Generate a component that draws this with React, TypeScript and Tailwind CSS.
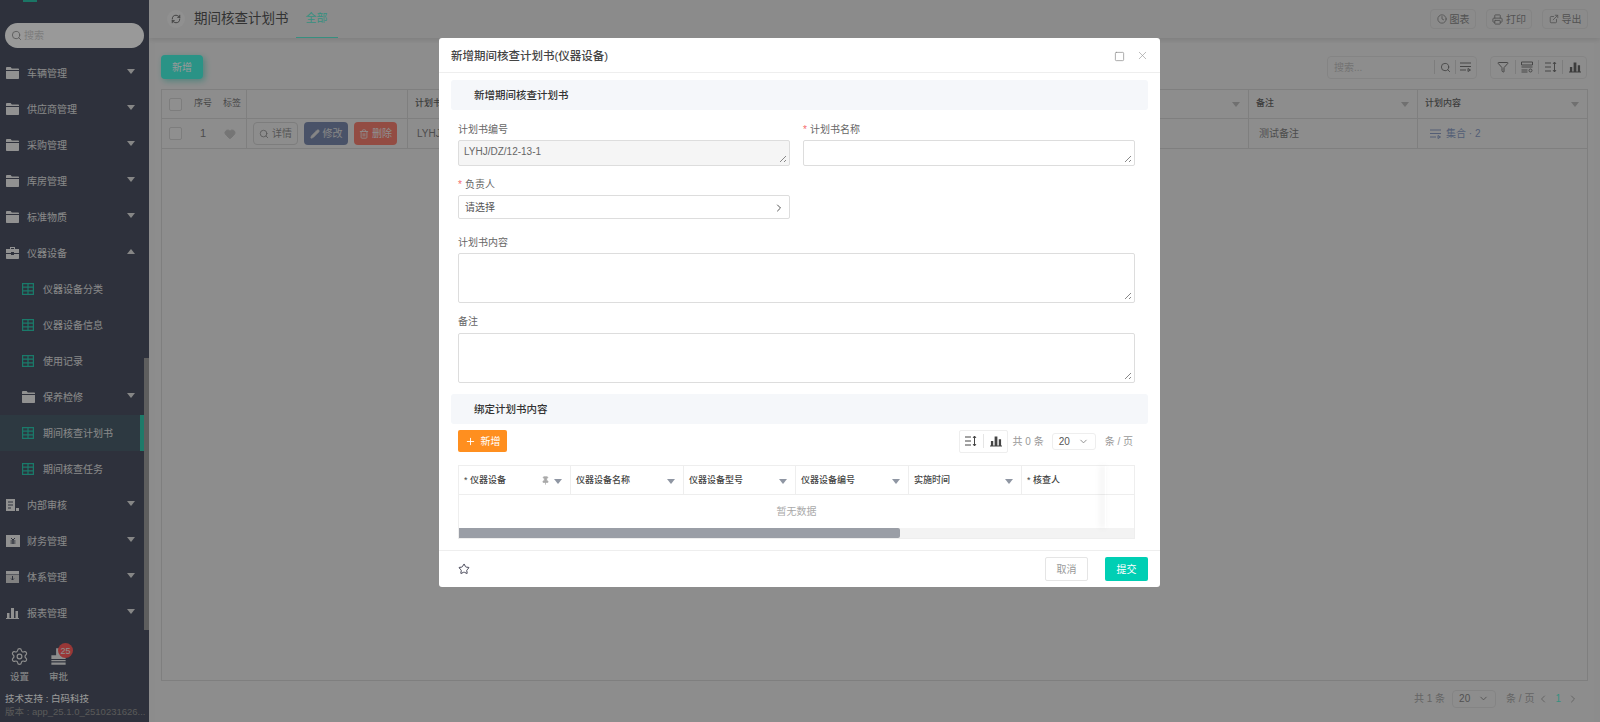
import { ChevronDown, ChevronLeft, ChevronRight, Clock, ExternalLink, Filter, Heart, Pencil, Pin, Plus, Printer, RefreshCw, Search, Settings, Square, Star, Trash2, X } from 'lucide-react'
import type { ReactNode } from 'react'

const font = { fontFamily: '"Liberation Sans", "Noto Sans CJK SC", sans-serif' }

function Caret({ up = false, className = 'border-t-[#a8a8a8]' }: { up?: boolean; className?: string }) {
  return (
    <span
      className={`inline-block h-0 w-0 border-x-[4px] border-t-[5px] border-x-transparent ${className} ${up ? 'rotate-180' : ''}`}
    />
  )
}

function FolderIcon() {
  return (
    <svg viewBox="0 0 13 12" className="h-3 w-[13px] fill-[#f2f2f2]">
      <path d="M0 1.200C0 .6.5 0 1 0h3.600l1.200 1.600H12c.6 0 1 .4 1 1V3H0z" />
      <path d="M0 4h13v7c0 .6-.4 1-1 1H1c-.6 0-1-.4-1-1z" />
    </svg>
  )
}

function BagIcon() {
  return (
    <svg viewBox="0 0 13 12" className="h-3 w-[13px] fill-[#f2f2f2]">
      <path d="M4 0h5v2h4v4H8V5H5v1H0V2h4zm1 1v1h3V1zM0 7h5v1h3V7h5v4c0 .6-.4 1-1 1H1c-.6 0-1-.4-1-1z" />
    </svg>
  )
}

function DocIcon() {
  return (
    <svg viewBox="0 0 13 12" className="h-3 w-[13px]">
      <path d="M0 0h9v12H0z" fill="#f2f2f2" />
      <path d="M2 3h5M2 6h5M2 9h3" stroke="#4d5364" />
      <path d="M10 9h3v3h-3z" fill="#f2f2f2" />
    </svg>
  )
}

function MoneyIcon() {
  return (
    <svg viewBox="0 0 14 12" className="h-3 w-[14px]">
      <path d="M0 0h14v12H0z" fill="#f2f2f2" />
      <path d="M5 3l2 2 2-2M4.500 6h5M4.500 8h5M7 5v4" stroke="#4d5364" fill="none" />
    </svg>
  )
}

function ArchiveIcon() {
  return (
    <svg viewBox="0 0 13 12" className="h-3 w-[13px]">
      <path d="M0 0h13v3H0z" fill="#f2f2f2" />
      <path d="M0 3.500h13V12H0z" fill="#d8d8d8" />
      <path d="M6.500 5v4M5 7.500 6.500 9 8 7.500" stroke="#4d5364" fill="none" />
    </svg>
  )
}

function BarsIcon({ className = 'h-3 w-[13px] fill-[#f2f2f2]' }: { className?: string }) {
  return (
    <svg viewBox="0 0 13 12" className={className}>
      <path d="M0 11h13v1H0zM1 6h2.500v5H1zM5 1h3v10H5zM9.500 4H12v7H9.500z" />
    </svg>
  )
}

function GridIcon() {
  return (
    <svg viewBox="0 0 12 12" className="h-3 w-3 fill-none stroke-[#2cccb1] stroke-[1.2]">
      <path d="M.6.6h10.800v10.800H.6zM.6 4.200h10.800M.6 7.800h10.800M6 .6v10.800" />
    </svg>
  )
}

function SortIcon({ className = 'h-3 w-3 stroke-[#444]' }: { className?: string }) {
  return (
    <svg viewBox="0 0 12 12" className={`${className} fill-none`}>
      <path d="M0 2h6M0 6h6M0 10h6M9.500 1v10M8 3l1.500-2L11 3M8 9l1.500 2L11 9" />
    </svg>
  )
}

function ListIcon({ className = 'h-3 w-3 stroke-[#777]' }: { className?: string }) {
  return (
    <svg viewBox="0 0 12 12" className={`${className} fill-none`}>
      <path d="M0 2h11M0 5.500h11M0 9h6M8 7.500v3l2.500-1.500z" />
    </svg>
  )
}

function FormIcon() {
  return (
    <svg viewBox="0 0 12 12" className="h-3 w-3 fill-none stroke-[#777]">
      <path d="M.5 1h11v3h-11zM.5 6h11M.5 9h6M.5 11h6" />
      <circle cx="9.500" cy="9.500" r="1.500" />
    </svg>
  )
}

function MenuRow({ icon, label, caret = 'down', sub = false, active = false }: { icon: ReactNode; label: string; caret?: 'down' | 'up' | 'none'; sub?: boolean; active?: boolean }) {
  return (
    <div className={`relative flex h-9 items-center text-[10px] text-[#e4e4e4] ${sub ? 'pl-[22px]' : 'pl-[6px]'} ${active ? 'bg-[#4b5f6d]' : ''}`}>
      <span className="flex w-[21px] shrink-0">{icon}</span>
      <span>{label}</span>
      {caret !== 'none' && (
        <span className="absolute left-[127px] top-[14px] flex">
          <Caret up={caret === 'up'} className="border-t-[#e0e0e0]" />
        </span>
      )}
      {active && <span className="absolute right-0 top-0 h-full w-1 bg-[#33cbb0]" />}
    </div>
  )
}

function Sidebar() {
  return (
    <aside className="relative flex h-full w-[149px] shrink-0 flex-col bg-[#4d5364]">
      <div className="ml-[23px] h-[2px] w-[14px] bg-[#2ec4a8]" />
      <div className="mx-[5px] mt-[21px] flex h-[25px] w-[139px] items-center gap-[2px] rounded-full bg-white pl-[6px] text-[10px] text-[#d0d0d0]">
        <Search size={11} className="text-[#999]" />
        搜索
      </div>
      <div className="mt-[7px] w-[144px]">
        <MenuRow icon={<FolderIcon />} label="车辆管理" />
        <MenuRow icon={<FolderIcon />} label="供应商管理" />
        <MenuRow icon={<FolderIcon />} label="采购管理" />
        <MenuRow icon={<FolderIcon />} label="库房管理" />
        <MenuRow icon={<FolderIcon />} label="标准物质" />
        <MenuRow icon={<BagIcon />} label="仪器设备" caret="up" />
        <MenuRow sub icon={<GridIcon />} label="仪器设备分类" caret="none" />
        <MenuRow sub icon={<GridIcon />} label="仪器设备信息" caret="none" />
        <MenuRow sub icon={<GridIcon />} label="使用记录" caret="none" />
        <MenuRow sub icon={<FolderIcon />} label="保养检修" />
        <MenuRow sub active icon={<GridIcon />} label="期间核查计划书" caret="none" />
        <MenuRow sub icon={<GridIcon />} label="期间核查任务" caret="none" />
        <MenuRow icon={<DocIcon />} label="内部审核" />
        <MenuRow icon={<MoneyIcon />} label="财务管理" />
        <MenuRow icon={<ArchiveIcon />} label="体系管理" />
        <MenuRow icon={<BarsIcon />} label="报表管理" />
      </div>
      <div className="mt-[16px] flex text-[9.5px] leading-[12px] text-[#e8e8e8]">
        <div className="flex w-[39px] flex-col items-center gap-[5px]">
          <Settings size={19} strokeWidth={1.5} className="text-[#ececec]" />
          设置
        </div>
        <div className="relative flex w-[39px] flex-col items-center gap-[5px]">
          <svg viewBox="0 0 16 16" className="h-[19px] w-[19px] fill-[#ececec]">
            <path d="M6 1h4v6h4v3H2V7h4zM2 11h12v1H2zM2 13h12v2H2z" />
          </svg>
          审批
          <span className="absolute left-[19px] top-[-4px] flex h-[15px] w-[15px] items-center justify-center rounded-full bg-[#ff5c5c] text-[9px] text-[#eee]">25</span>
        </div>
      </div>
      <div className="mt-[9px] pl-[5px] text-[9.5px] leading-[13px] text-white">技术支持 : 白码科技</div>
      <div className="whitespace-nowrap pl-[5px] text-[9.5px] leading-[13px] text-[#969696]">版本 : app_25.1.0_2510231626...</div>
      {/* menu scrollbar */}
      <span className="absolute left-[144px] top-[358px] h-[272px] w-[5px] bg-[#9d9d9d]" />
    </aside>
  )
}

function HeadCell({ label, className = '' }: { label: string; className?: string }) {
  return (
    <div className={`relative flex h-full items-center border-r border-[#d4d4d4] pl-[7px] text-[9px] font-medium text-[#666] ${className}`}>
      {label}
      <span className="absolute right-[8px] top-[12px] flex">
        <Caret className="border-t-[#bbb]" />
      </span>
    </div>
  )
}

function ToolBtn({ icon, label }: { icon: ReactNode; label: string }) {
  return (
    <div className="flex h-[20px] w-[46px] items-center justify-center gap-[3px] rounded-sm border border-[#dcdcdc] text-[10px] text-[#8a8a8a]">
      {icon}
      {label}
    </div>
  )
}

function Background() {
  return (
    <main className="flex h-full min-w-0 flex-1 flex-col bg-[#eaeaea]">
      <header className="flex h-[38px] items-center bg-[#e8e8e8] pl-[18px] pr-3 shadow-[0_2px_5px_rgba(0,0,0,.1)]">
        <span className="flex h-[18px] w-[18px] items-center justify-center rounded-full bg-[#f0f0f0]">
          <RefreshCw size={10} className="text-[#555]" />
        </span>
        <span className="ml-[9px] text-[13.5px] text-[#555]">期间核查计划书</span>
        <span className="ml-[7px] flex h-full w-[42px] items-center justify-center border-b border-[#5cefd6] text-[11px] text-[#5cefd6]">全部</span>
        <div className="ml-auto flex gap-[10px]">
          <ToolBtn icon={<Clock size={10} />} label="图表" />
          <ToolBtn icon={<Printer size={11} />} label="打印" />
          <ToolBtn icon={<ExternalLink size={10} />} label="导出" />
        </div>
      </header>
      <section className="mx-[6px] mt-[5px] flex flex-1 flex-col bg-[#ececec] px-[6px] pt-[12px]">
        <div className="flex h-6 items-center justify-between">
          <span className="flex h-6 w-[42px] items-center justify-center rounded-sm bg-[#46f5e0] text-[10px] text-white shadow-[2px_2px_6px_rgba(63,208,188,.6)]">新增</span>
          <div className="flex gap-[13px]">
            <div className="flex h-[23px] w-[150px] items-center rounded-sm border border-[#dcdcdc] pl-[6px] text-[10px] text-[#c0c0c0]">
              <span className="flex-1">搜索...</span>
              <span className="flex h-[14px] w-[21px] items-center justify-center border-l border-[#d0d0d0]"><Search size={11} className="text-[#777]" /></span>
              <span className="flex h-[14px] w-[21px] items-center justify-center border-l border-[#d0d0d0]"><ListIcon /></span>
            </div>
            <div className="mr-[1px] flex h-[23px] w-[97px] items-center rounded-sm border border-[#dcdcdc]">
              <span className="flex h-[14px] w-[24px] items-center justify-center"><Filter size={12} className="text-[#777]" /></span>
              <span className="flex h-[14px] w-[24px] items-center justify-center border-l border-[#d0d0d0]"><FormIcon /></span>
              <span className="flex h-[14px] w-[24px] items-center justify-center border-l border-[#d0d0d0]"><SortIcon className="h-3 w-3 stroke-[#777]" /></span>
              <span className="flex h-[14px] w-[24px] items-center justify-center border-l border-[#d0d0d0]"><BarsIcon className="h-3 w-3 fill-[#666]" /></span>
            </div>
          </div>
        </div>
        <div className="mt-[10px] h-[592px] border border-[#d4d4d4]">
          <div className="flex h-[29px] items-center border-b border-[#d4d4d4] text-[9px] text-[#777]">
            <div className="flex h-full w-[85px] items-center whitespace-nowrap border-r border-[#d4d4d4]">
              <span className="ml-[7px] h-[13px] w-[13px] rounded-[2px] border border-[#d0d0d0] bg-[#eeeeee]" />
              <span className="ml-[12px]">序号</span>
              <span className="ml-[11px]">标签</span>
            </div>
            <div className="h-full w-[161px] border-r border-[#d4d4d4]" />
            <HeadCell label="计划书编号" className="w-[841px]" />
            <HeadCell label="备注" className="w-[169px]" />
            <HeadCell label="计划内容" className="flex-1 border-r-0" />
          </div>
          <div className="flex h-[30px] items-center border-b border-[#d4d4d4] text-[10px] text-[#808080]">
            <div className="flex h-full w-[85px] items-center border-r border-[#d4d4d4]">
              <span className="ml-[7px] h-[13px] w-[13px] rounded-[2px] border border-[#d0d0d0] bg-[#eeeeee]" />
              <span className="ml-[18px] text-[11px]">1</span>
              <Heart size={12} className="ml-[18px] fill-[#c4c4c4] text-[#c4c4c4]" />
            </div>
            <div className="flex h-full w-[161px] items-center gap-[6px] border-r border-[#d4d4d4] pl-[6px]">
              <span className="flex h-[23px] w-[45px] items-center justify-center gap-[3px] rounded-sm border border-[#d0d0d0] text-[#909090]"><Search size={10} />详情</span>
              <span className="flex h-[23px] w-[44px] items-center justify-center gap-[3px] rounded-sm bg-[#7b89ad] text-[#e0e0e0]"><Pencil size={10} className="fill-[#e0e0e0]" />修改</span>
              <span className="flex h-[23px] w-[43px] items-center justify-center gap-[3px] rounded-sm bg-[#f57f70] text-[#eee]"><Trash2 size={10} />删除</span>
            </div>
            <div className="flex h-full w-[841px] items-center border-r border-[#d4d4d4] pl-[9px]">LYHJ/DZ/12-13-1</div>
            <div className="flex h-full w-[169px] items-center border-r border-[#d4d4d4] pl-[10px]">测试备注</div>
            <div className="flex h-full flex-1 items-center gap-1 pl-[12px] text-[#8a9cc4]"><ListIcon className="h-3 w-3 stroke-[#8a9cc4]" />集合 · 2</div>
          </div>
        </div>
        <div className="flex h-[35px] items-center justify-end pr-[9px] text-[10px] text-[#a8a8a8]">
          <span>共 1 条</span>
          <span className="ml-[7px] flex h-[18px] w-[44px] items-center justify-between rounded-sm border border-[#dcdcdc] px-[6px] text-[#888]">20<ChevronDown size={11} /></span>
          <span className="ml-[10px]">条 / 页</span>
          <ChevronLeft size={12} className="ml-[3px]" />
          <span className="ml-[6px] font-medium text-[#5cefd6]">1</span>
          <ChevronRight size={12} className="ml-[6px]" />
        </div>
      </section>
    </main>
  )
}

function Label({ children, req = false }: { children: ReactNode; req?: boolean }) {
  return (
    <div className="flex h-[17px] items-center pt-px text-[10px] text-[#666]">
      {req && <span className="mr-[3px] text-[#f56c6c]">*</span>}
      {children}
    </div>
  )
}

function Grip() {
  return (
    <svg viewBox="0 0 8 8" className="absolute bottom-[2px] right-[2px] h-2 w-2 stroke-[#888]">
      <path d="M1 7l6-6M5 7l2-2" />
    </svg>
  )
}

function Area({ className = '', children }: { className?: string; children?: ReactNode }) {
  return (
    <div className={`relative rounded-[2px] border border-[#ddd] ${className}`}>
      {children}
      <Grip />
    </div>
  )
}

function SectionBar({ children }: { children: ReactNode }) {
  return (
    <div className="flex h-[30px] items-center rounded-[3px] bg-[#f5f7fa] pl-[23px] pt-[2px] text-[10.5px] font-medium text-[#333]">{children}</div>
  )
}

function ModalCol({ label, pin = false, className = '' }: { label: string; pin?: boolean; className?: string }) {
  return (
    <div className={`relative flex h-full items-center border-r border-[#eee] pl-[5px] pt-px text-[9px] font-medium text-[#444] ${className}`}>
      {label}
      {pin && <Pin size={9} className="absolute right-[20px] top-[10px] fill-[#aaa] text-[#aaa]" />}
      <span className="absolute right-[8px] top-[13px] flex">
        <Caret className="border-t-[#8f96a3]" />
      </span>
    </div>
  )
}

function Modal() {
  return (
    <div className="absolute left-[439px] top-[38px] flex h-[549px] w-[721px] flex-col rounded-[3px] bg-white">
      <div className="flex h-[35px] items-center border-b border-[#eee] pl-3 pr-[11px]">
        <span className="pt-[3px] text-[11.5px] font-medium text-[#444]">新增期间核查计划书(仪器设备)</span>
        <Square size={11} strokeWidth={1.5} className="ml-auto mt-[2px] text-[#888]" />
        <X size={13} strokeWidth={1.2} className="ml-[11px] text-[#999]" />
      </div>
      <div className="flex-1 px-3 pt-[7px]">
        <SectionBar>新增期间核查计划书</SectionBar>
        <div className="pl-[7px] pr-[13px]">
          <div className="mt-[10px] grid grid-cols-[332px_332px] gap-x-[13px]">
            <div>
              <Label>计划书编号</Label>
              <Area className="mt-[3px] h-[26px] bg-[#f5f5f5] pl-[5px] text-[10px] leading-[22px] text-[#666]">LYHJ/DZ/12-13-1</Area>
            </div>
            <div>
              <Label req>计划书名称</Label>
              <Area className="mt-[3px] h-[26px]" />
            </div>
          </div>
          <div className="mt-[9px] w-[332px]">
            <Label req>负责人</Label>
            <div className="mt-[3px] flex h-[24px] items-center justify-between rounded-[2px] border border-[#ddd] pl-[6px] pr-[4px] pt-px text-[10px] text-[#555]">
              请选择
              <ChevronRight size={12} className="text-[#555]" />
            </div>
          </div>
          <div className="mt-[14px]">
            <Label>计划书内容</Label>
            <Area className="mt-[3px] h-[50px]" />
          </div>
          <div className="mt-[9px]">
            <Label>备注</Label>
            <Area className="mt-[4px] h-[50px]" />
          </div>
        </div>
        <div className="mt-[11px]">
          <SectionBar>绑定计划书内容</SectionBar>
        </div>
        <div className="pl-[7px] pr-[13px]">
          <div className="mt-[5px] flex h-[24px] items-center justify-between">
            <span className="flex h-[22px] w-[49px] items-center justify-center gap-[5px] rounded-[2px] bg-[#ff8f1f] text-[10px] text-white">
              <Plus size={11} />新增
            </span>
            <div className="flex items-center text-[10px] text-[#999]">
              <span className="flex h-[23px] w-[49px] items-center justify-center rounded-[2px] border border-[#eee]">
                <SortIcon className="h-3 w-3 stroke-[#444]" />
                <span className="mx-[6px] h-[14px] w-px bg-[#e5e5e5]" />
                <BarsIcon className="h-3 w-3 fill-[#444]" />
              </span>
              <span className="ml-[5px]">共 0 条</span>
              <span className="ml-[8px] flex h-[17px] w-[44px] items-center justify-between rounded-[3px] border border-[#eee] px-[6px] text-[#555]">20<ChevronDown size={11} className="text-[#888]" /></span>
              <span className="ml-[9px] mr-[2px]">条 / 页</span>
            </div>
          </div>
          <div className="relative mt-[12px] h-[74px] border border-[#eee]">
            <div className="flex h-[29px] border-b border-[#eee]">
              <ModalCol pin label="* 仪器设备" className="w-[112px]" />
              <ModalCol label="仪器设备名称" className="w-[113px]" />
              <ModalCol label="仪器设备型号" className="w-[112px]" />
              <ModalCol label="仪器设备编号" className="w-[113px]" />
              <ModalCol label="实施时间" className="w-[113px]" />
              <div className="flex h-full w-[85px] items-center pl-[5px] pt-px text-[9px] font-medium text-[#444]">* 核查人</div>
            </div>
            <div className="flex h-[33px] items-center justify-center text-[10px] text-[#aaa]">暂无数据</div>
            <div className="h-[10px] bg-[#f3f3f3]">
              <div className="h-full w-[441px] rounded-r-[2px] bg-[#9a9ea6]" />
            </div>
            <span className="absolute left-[646px] top-0 h-[62px] w-px shadow-[-3px_0_6px_rgba(0,0,0,.25)]" />
          </div>
        </div>
      </div>
      <div className="flex h-[37px] items-center border-t border-[#eee] pl-[19px] pr-3">
        <Star size={12} className="text-[#445]" />
        <span className="ml-auto flex h-6 w-[43px] items-center justify-center rounded-[2px] border border-[#e5e5e5] text-[10px] text-[#999]">取消</span>
        <span className="ml-[17px] flex h-6 w-[43px] items-center justify-center rounded-[2px] bg-[#00cfb4] text-[10px] text-white">提交</span>
      </div>
    </div>
  )
}

export default function App() {
  return (
    <div className="relative flex h-[722px] w-[1600px] overflow-hidden" style={font}>
      <Sidebar />
      <Background />
      <div className="absolute inset-0 bg-black/40" />
      <Modal />
    </div>
  )
}
